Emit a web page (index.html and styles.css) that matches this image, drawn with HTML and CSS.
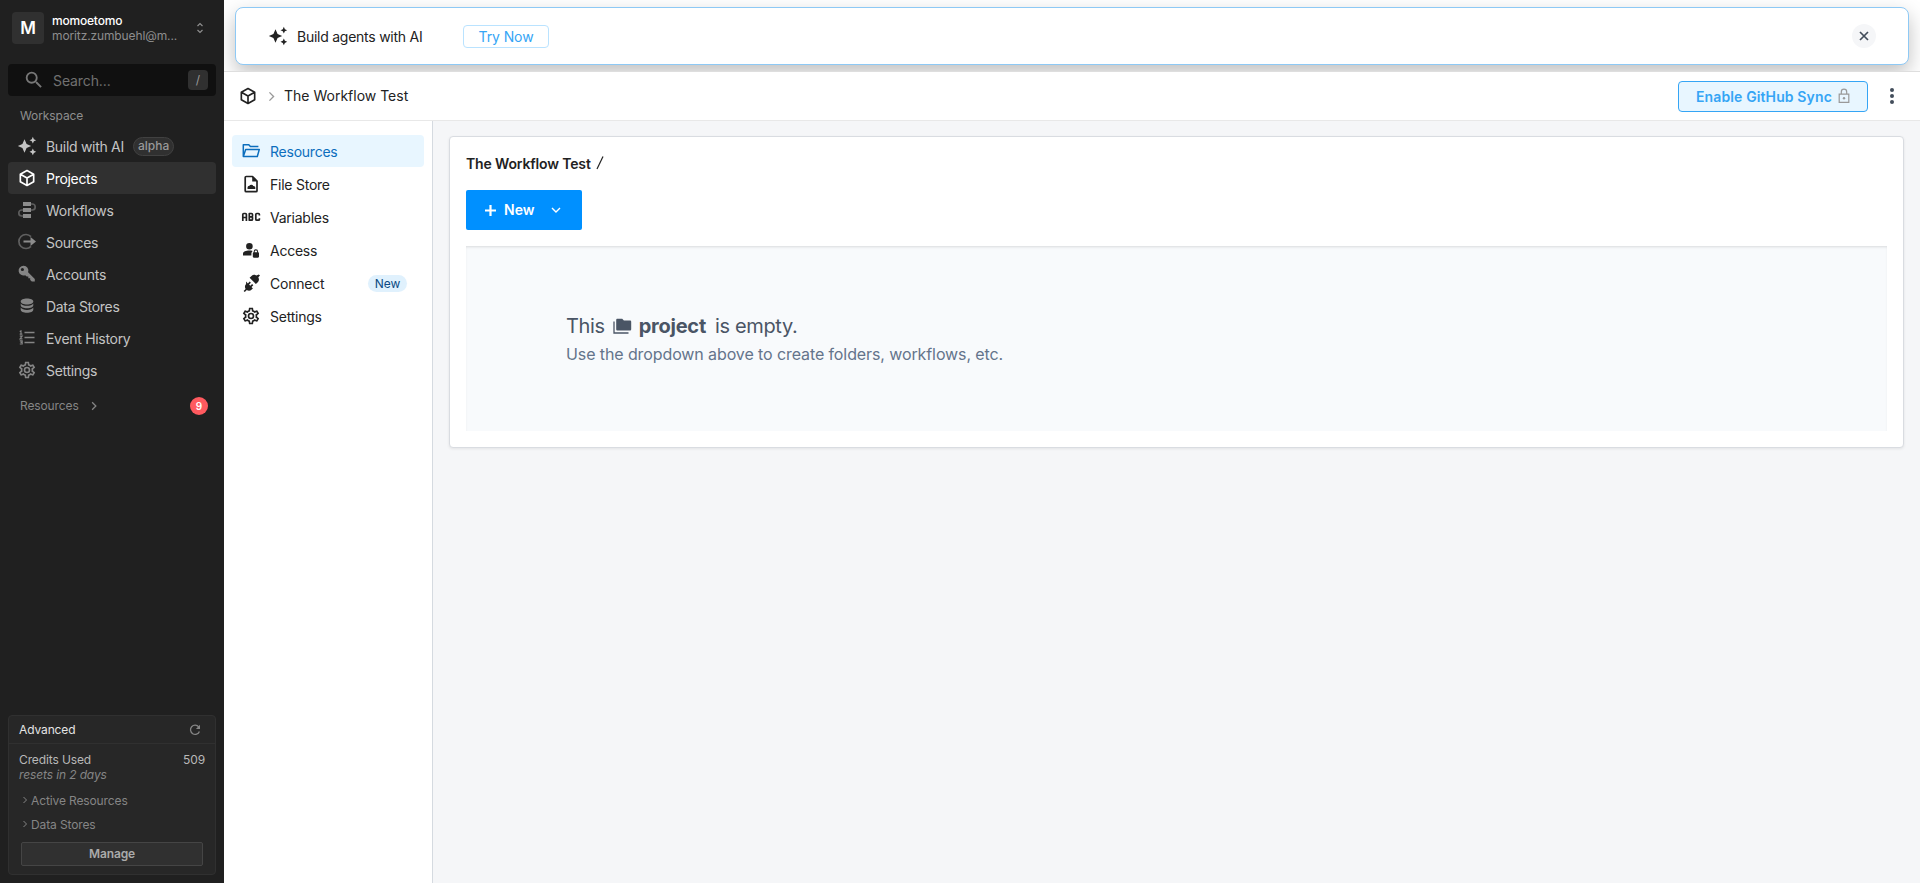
FILE: index.html
```html
<!DOCTYPE html>
<html lang="en">
<head>
<meta charset="utf-8">
<title>The Workflow Test</title>
<link rel="stylesheet" href="styles.css">
</head>
<body>
<svg class="defs" aria-hidden="true">
  <symbol id="sparkles" viewBox="0 0 24 24"><path fill="currentColor" d="M19 9l1.25-2.75L23 5l-2.75-1.25L19 1l-1.25 2.75L15 5l2.75 1.25L19 9zm-7.5.5L9 4 6.5 9.5 1 12l5.5 2.5L9 20l2.5-5.5L17 12l-5.5-2.5zM19 15l-1.25 2.75L15 19l2.75 1.25L19 23l1.25-2.75L23 19l-2.75-1.25L19 15z"/></symbol>
  <symbol id="cube" viewBox="0 0 24 24"><path fill="none" stroke="currentColor" stroke-width="2" stroke-linejoin="round" d="M12 3l8 4.500v9L12 21l-8-4.500v-9zM4 7.500l8 4.500 8-4.500M12 12v9"/></symbol>
  <symbol id="gear" viewBox="0 0 24 24"><path fill="currentColor" d="M12,8A4,4 0 0,1 16,12A4,4 0 0,1 12,16A4,4 0 0,1 8,12A4,4 0 0,1 12,8M12,10A2,2 0 0,0 10,12A2,2 0 0,0 12,14A2,2 0 0,0 14,12A2,2 0 0,0 12,10M10,22C9.75,22 9.54,21.82 9.5,21.58L9.13,18.93C8.5,18.68 7.96,18.34 7.44,17.94L4.95,18.95C4.73,19.03 4.46,18.95 4.34,18.73L2.34,15.27C2.21,15.05 2.27,14.78 2.46,14.63L4.57,12.97L4.5,12L4.57,11L2.46,9.37C2.27,9.22 2.21,8.95 2.34,8.73L4.34,5.27C4.46,5.05 4.73,4.96 4.95,5.05L7.44,6.05C7.96,5.66 8.5,5.32 9.13,5.07L9.5,2.42C9.54,2.18 9.75,2 10,2H14C14.25,2 14.46,2.18 14.5,2.42L14.87,5.07C15.5,5.32 16.04,5.66 16.56,6.05L19.05,5.05C19.27,4.96 19.54,5.05 19.66,5.27L21.66,8.73C21.79,8.95 21.73,9.22 21.54,9.37L19.43,11L19.5,12L19.43,13L21.54,14.63C21.73,14.78 21.79,15.05 21.66,15.27L19.66,18.73C19.54,18.95 19.27,19.04 19.05,18.95L16.56,17.95C16.04,18.34 15.5,18.68 14.87,18.93L14.5,21.58C14.46,21.82 14.25,22 14,22H10M11.25,4L10.88,6.61C9.68,6.86 8.62,7.5 7.85,8.39L5.44,7.35L4.69,8.65L6.8,10.2C6.4,11.37 6.4,12.64 6.8,13.8L4.68,15.36L5.43,16.66L7.86,15.62C8.63,16.5 9.68,17.14 10.87,17.38L11.24,20H12.76L13.13,17.39C14.32,17.14 15.37,16.5 16.14,15.62L18.57,16.66L19.32,15.36L17.2,13.81C17.6,12.64 17.6,11.37 17.2,10.2L19.31,8.65L18.56,7.35L16.15,8.39C15.38,7.5 14.32,6.86 13.12,6.62L12.75,4H11.25Z"/></symbol>
  <symbol id="chevron" viewBox="0 0 8 8"><path fill="none" stroke="currentColor" stroke-width="1" d="M2.500 1l3 3-3 3"/></symbol>
</svg>
<div class="app">
  <aside class="sidebar">
    <div class="account">
      <div class="avatar">M</div>
      <div class="who"><div class="name">momoetomo</div><div class="mail">moritz.zumbuehl@m...</div></div>
      <svg class="updown" viewBox="0 0 8 12"><path fill="none" stroke="currentColor" stroke-width="1.200" d="M1.500 4L4 1.500 6.500 4M1.500 8L4 10.500 6.500 8"/></svg>
    </div>
    <div class="search">
      <svg class="lens" viewBox="0 0 24 24"><path fill="currentColor" d="M15.500 14h-.79l-.28-.27A6.470 6.470 0 0 0 16 9.500 6.500 6.500 0 1 0 9.500 16c1.610 0 3.090-.59 4.230-1.570l.27.28v.79l5 4.990L20.490 19l-4.990-5zm-6 0C7.010 14 5 11.990 5 9.500S7.010 5 9.500 5 14 7.010 14 9.500 11.990 14 9.500 14z"/></svg>
      <span class="placeholder">Search...</span><span class="key">/</span>
    </div>
    <div class="group">Workspace</div>
    <nav class="menu">
      <a class="item"><svg class="icon bright"><use href="#sparkles"/></svg><span class="label">Build with AI</span><span class="alpha">alpha</span></a>
      <a class="item current"><svg class="icon"><use href="#cube"/></svg><span class="label">Projects</span></a>
      <a class="item"><svg class="icon" viewBox="0 0 20 20"><path fill="none" stroke="#5c5c5c" stroke-width="1.700" d="M14 4h1.200a2.900 2.900 0 0 1 0 6H4.800a2.900 2.900 0 0 0 0 6H7"/><path fill="#8c8c8c" d="M6 2h8v4H6zM6 8h8v4H6zM6 14h8v4H6z"/></svg><span class="label">Workflows</span></a>
      <a class="item"><svg class="icon" viewBox="0 0 20 20"><path fill="none" stroke="#606060" stroke-width="1.700" d="M14 4.700A7 7 0 1 0 14 14.300"/><path fill="#8c8c8c" d="M6.500 8.500h7V5l5.500 4.500-5.500 4.500v-3.500h-7z"/></svg><span class="label">Sources</span></a>
      <a class="item"><svg class="icon" viewBox="0 0 20 20"><path fill="currentColor" fill-rule="evenodd" d="M6.600 1.700a4.900 4.900 0 1 0 1.600 9.500l1.500 1.300h1.600v1.700h1.900v1.900l1.600 1.500h3v-2.700l-6.700-6.700A4.900 4.900 0 0 0 6.600 1.700zM5.400 3.900a1.600 1.600 0 1 1 0 3.200 1.600 1.600 0 0 1 0-3.200z"/></svg><span class="label">Accounts</span></a>
      <a class="item"><svg class="icon" viewBox="0 0 20 20"><path fill="currentColor" d="M10 2.600c3.500 0 6.300 1.200 6.300 2.900S13.500 8.500 10 8.500 3.700 7.200 3.700 5.500 6.500 2.600 10 2.600z"/><path fill="currentColor" d="M3.700 7.400c1 1.400 3.400 2.300 6.300 2.300s5.300-.9 6.300-2.300v1.900c0 1.700-2.800 3-6.300 3s-6.300-1.300-6.300-3zM3.700 11.600c1 1.400 3.400 2.300 6.300 2.300s5.300-.9 6.300-2.300v2.200c0 1.700-2.800 3-6.300 3s-6.300-1.300-6.300-3z"/></svg><span class="label">Data Stores</span></a>
      <a class="item"><svg class="icon" viewBox="0 0 20 20"><path fill="none" stroke="currentColor" stroke-width="1.400" d="M7.500 4.500h10M7.500 9.500h10M7.500 14.500h10"/><path fill="none" stroke="currentColor" stroke-width="1.100" d="M2.700 3.600l1.300-.7v3.200M2.700 6.100h2.700M2.800 8.100h2.400l-2.200 2.800h2.500M2.800 12.900h2.400v3.100H2.800M3.500 14.400h1.700"/></svg><span class="label">Event History</span></a>
      <a class="item"><svg class="icon"><use href="#gear"/></svg><span class="label">Settings</span></a>
    </nav>
    <div class="more"><span>Resources</span><svg class="more-arrow"><use href="#chevron"/></svg><span class="count">9</span></div>
    <section class="plan">
      <div class="plan-head"><span>Advanced</span><svg class="refresh" viewBox="0 0 12 12"><path fill="none" stroke="currentColor" stroke-width="1.300" d="M9.700 2.900A4.600 4.600 0 1 0 10.400 7.400"/><path fill="currentColor" d="M11 .8v4.100H6.900z"/></svg></div>
      <div class="plan-body">
        <div class="credits"><span>Credits Used</span><span>509</span></div>
        <div class="resets">resets in 2 days</div>
        <div class="fold"><svg><use href="#chevron"/></svg><span>Active Resources</span></div>
        <div class="fold"><svg><use href="#chevron"/></svg><span>Data Stores</span></div>
        <div class="manage">Manage</div>
      </div>
    </section>
  </aside>
  <main class="main">
    <div class="banner-area">
      <div class="banner">
        <svg class="icon"><use href="#sparkles"/></svg><span class="banner-text">Build agents with AI</span><span class="try">Try Now</span>
        <span class="close"><svg viewBox="0 0 10 10"><path fill="none" stroke="currentColor" stroke-width="1.700" d="M1 1l8 8M9 1L1 9"/></svg></span>
      </div>
    </div>
    <header class="topbar">
      <svg class="icon"><use href="#cube"/></svg><svg class="crumb-arrow"><use href="#chevron"/></svg><span class="crumb">The Workflow Test</span>
      <span class="sync"><span class="sync-text">Enable GitHub Sync</span><svg viewBox="0 0 12 16"><path fill="none" stroke="#999" stroke-width="1.200" d="M1.200 6.200h9.600v8.200H1.200zM3.300 6V3.900a2.700 2.700 0 0 1 5.400 0V6"/><circle cx="6" cy="10.300" r="1.200" fill="#999"/></svg></span>
      <svg class="dots" viewBox="0 0 4 18"><g fill="currentColor"><circle cx="2" cy="3" r="2"/><circle cx="2" cy="9" r="2"/><circle cx="2" cy="15" r="2"/></g></svg>
    </header>
    <div class="body">
      <nav class="tabs">
        <a class="tab active"><svg class="icon" viewBox="0 0 20 20"><path fill="none" stroke="currentColor" stroke-width="1.500" stroke-linejoin="round" d="M2.300 15V3.700h5.500l1.600 1.700h8M2.300 15.500L4.700 8.400h13.600l-2 7.100z"/></svg><span class="label">Resources</span></a>
        <a class="tab"><svg class="icon" viewBox="0 0 20 20"><path fill="none" stroke="currentColor" stroke-width="1.700" stroke-linejoin="round" d="M11.500 2.500H5.200c-.6 0-1 .4-1 1v13.200c0 .6.400 1 1 1h9.800c.6 0 1-.4 1-1V7z"/><path fill="currentColor" d="M11.200 2v5.500h5.300zM6.500 15v-1.200c0-1.200.8-2 1.900-2a2.200 2.200 0 0 1 3.900.2c1.200-.1 2 .7 2 1.700V15z"/></svg><span class="label">File Store</span></a>
        <a class="tab"><svg class="icon" viewBox="0 0 20 20"><path fill="none" stroke="currentColor" stroke-width="1.700" stroke-linejoin="round" d="M1.800 14V7.500q0-1 1-1h1.600q1 0 1 1V14M1.800 10.500h3.600M8.300 6.500v6.700h2.200q1 0 1-1v-1.600l-.7-.7.7-.7V7.500q0-1-1-1zM8.300 9.900h2.600M18.400 8.500v-1q0-1-1-1h-1.600q-1 0-1 1v4.700q0 1 1 1h1.600q1 0 1-1v-1"/></svg><span class="label">Variables</span></a>
        <a class="tab"><svg class="icon" viewBox="0 0 20 20"><path fill="currentColor" fill-rule="evenodd" d="M8.400 3a3.300 3.300 0 1 1 0 6.600 3.300 3.300 0 0 1 0-6.600zM2 15.500v-1.700c0-2.200 2.900-3.300 6.400-3.300 1.200 0 2.300.1 3.200.4-.8.800-1.200 1.700-1.200 2.600v2zM12.700 12.300v-.8a2.200 2.200 0 0 1 4.400 0v.8c.6.100.9.500.9 1v3.300c0 .7-.4 1.100-1.100 1.100h-4c-.7 0-1.100-.4-1.100-1.100v-3.300c0-.5.3-.9.900-1zm1 0h2.400v-.8c0-1.500-2.400-1.500-2.400 0z"/></svg><span class="label">Access</span></a>
        <a class="tab"><svg class="icon" viewBox="0 0 20 20"><path fill="currentColor" d="M17.800 1.400l1.200 1.200-1.700 1.700c1 1.700.9 3.500-.5 4.900l-1.900 1.900-6.300-6.300 1.900-1.900c1.400-1.400 3.200-1.500 4.900-.5zM5 8.500l1.900 1.900 1.800-1.800 1.200 1.200-1.800 1.800 1.200 1.200 1.800-1.800 1.200 1.200-1.800 1.800 1.400 1.400-1.200 1.200c-1.400 1.400-3.300 1.500-4.900.5l-2 2-1.200-1.200 2-2c-1-1.600-.9-3.500.5-4.900z"/></svg><span class="label">Connect</span><span class="new-tag">New</span></a>
        <a class="tab"><svg class="icon"><use href="#gear"/></svg><span class="label">Settings</span></a>
      </nav>
      <div class="content">
        <section class="card">
          <div class="path"><span>The Workflow Test</span><svg class="slash" viewBox="0 0 8 14"><path fill="none" stroke="currentColor" stroke-width="1.200" d="M7 .5L1 13"/></svg></div>
          <div class="new"><svg class="plus" viewBox="0 0 10 10"><path fill="none" stroke="currentColor" stroke-width="2" d="M5 0v10M0 5h10"/></svg><span>New</span><svg class="down" viewBox="0 0 10 6"><path fill="none" stroke="currentColor" stroke-width="1.400" d="M1 1l4 4 4-4"/></svg></div>
          <div class="empty">
            <div class="empty-title"><span>This</span><svg viewBox="0 0 19 16"><path fill="none" stroke="currentColor" stroke-width="1.300" d="M1 3.500V15h14.500"/><path fill="currentColor" d="M4.500.7h4.700l1.700 1.700h6c.8 0 1.300.5 1.300 1.300v7.600c0 .8-.5 1.300-1.300 1.300H4.500c-.8 0-1.300-.5-1.300-1.300V2c0-.8.500-1.300 1.300-1.300z"/></svg><b>project</b><span>is empty.</span></div>
            <div class="empty-text">Use the dropdown above to create folders, workflows, etc.</div>
          </div>
        </section>
      </div>
    </div>
  </main>
</div>
</body>
</html>
```
FILE: styles.css
```css
* { box-sizing: border-box; }
body { margin: 0; font-family: Inter, "Liberation Sans", sans-serif; font-size: 14px; line-height: 20px; color: #222; }
.defs { position: absolute; width: 0; height: 0; }
svg { display: block; flex: none; }
.app { display: flex; width: 100%; height: 100vh; overflow: hidden; }
.icon { width: 20px; height: 20px; }
.label { padding-top: 2px; }

/* Sidebar */
.sidebar { display: flex; flex-direction: column; flex: none; width: 224px; padding: 12px 8px 8px; background: #202020; color: #c4c4c4; }
.account { display: flex; height: 32px; padding-left: 4px; }
.avatar { width: 32px; height: 32px; border-radius: 4px; background: #303030; color: #fff; font-size: 17px; font-weight: 600; line-height: 32px; text-align: center; }
.who { width: 140px; margin: 1px 0 0 8px; white-space: nowrap; line-height: 15px; }
.name { color: #fff; font-size: 12px; font-weight: 500; letter-spacing: -0.2px; }
.mail { color: #8e8e8e; font-size: 12px; letter-spacing: -0.12px; }
.updown { width: 8px; height: 12px; margin: 10px 0 0 4px; color: #8e8e8e; }
.search { display: flex; align-items: center; height: 32px; margin-top: 20px; padding: 0 8px 0 15px; border-radius: 4px; background: #101010; color: #707070; }
.lens { width: 22px; height: 22px; color: #777; }
.placeholder { margin: 2px 0 0 8px; letter-spacing: -0.1px; }
.key { width: 20px; height: 20px; margin-left: auto; border-radius: 4px; background: #303030; color: #999; font-size: 12px; text-align: center; }
.group { height: 34px; padding: 10px 12px 0; color: #8e8e8e; font-size: 12px; line-height: 20px; letter-spacing: -0.1px; }
.item { display: flex; align-items: center; height: 32px; padding-left: 9px; border-radius: 4px; letter-spacing: -0.3px; }
.item .icon { margin-right: 9px; color: #858585; }
.item .bright { color: #c4c4c4; }
.current { background: #303030; color: #fff; }
.current .icon { color: #fff; }
.alpha { height: 19px; margin-left: 9px; padding: 0 4px; border: 1px solid #414141; border-radius: 10px; background: #303030; color: #999; font-size: 12px; font-weight: 500; line-height: 16px; letter-spacing: 0; }
.more { display: flex; align-items: center; height: 40px; padding: 0 8px 0 12px; color: #858585; font-size: 12px; letter-spacing: -0.12px; }
.more-arrow { width: 10px; height: 10px; margin-left: 10px; }
.count { width: 18px; height: 18px; margin-left: auto; border-radius: 50%; background: #ff5a5f; color: #fff; font-size: 10px; font-weight: 600; line-height: 18px; text-align: center; }
.plan { height: 160px; margin-top: auto; border: 1px solid #303030; border-radius: 4px; background: #272727; font-size: 12px; letter-spacing: -0.12px; }
.plan-head { display: flex; justify-content: space-between; align-items: center; height: 28px; padding: 0 14px 0 10px; border-bottom: 1px solid #303030; color: #e4e4e4; }
.refresh { width: 12px; height: 12px; color: #858585; }
.plan-body { padding: 8px 10px 0; }
.credits { display: flex; justify-content: space-between; line-height: 15px; color: #b8b8b8; }
.resets { font-style: italic; line-height: 15px; color: #858585; }
.fold { display: flex; align-items: center; height: 24px; color: #858585; }
.resets + .fold { margin-top: 7px; }
.fold svg { width: 8px; height: 8px; margin: 0 2px 2px 2px; }
.manage { height: 24px; margin: 5px 2px 0; border: 1px solid #454545; border-radius: 2px; background: #303030; color: #aaa; font-weight: 600; line-height: 22px; text-align: center; }

/* Banner and top bar */
.main { display: flex; flex-direction: column; flex: 1; min-width: 0; background: #f5f6f8; }
.banner-area { height: 72px; padding: 7px 11px 0; overflow: hidden; border-bottom: 1px solid #dedede; background: #fff; }
.banner { display: flex; align-items: center; height: 58px; padding: 0 32px 0 33px; border: 1px solid #8ec9f5; border-radius: 8px; background: #fff; box-shadow: 0 8px 20px rgba(0, 0, 0, .25); }
.banner .icon { margin-left: -1px; }
.banner-text { width: 127px; margin: 2px 0 0 9px; white-space: nowrap; letter-spacing: -0.25px; }
.try { width: 86px; height: 23px; margin-left: 39px; border: 1px solid #bae3ff; border-radius: 4px; color: #35a5f5; line-height: 22px; text-align: center; letter-spacing: -0.1px; }
.close { display: grid; place-items: center; width: 24px; height: 24px; margin-left: auto; border-radius: 50%; background: #f5f6f8; color: #434d5b; }
.close svg { width: 10px; height: 10px; }
.topbar { display: flex; align-items: center; flex: none; height: 49px; padding: 0 26px 0 14px; border-bottom: 1px solid #e8e8e8; background: #fff; }
.crumb-arrow { width: 11px; height: 11px; margin: 1px 7px 0 8px; color: #999; }
.sync { display: flex; align-items: center; width: 190px; height: 31px; margin-left: auto; padding-left: 17px; border: 1px solid #35a5f5; border-radius: 4px; background: #e8f6ff; color: #35a5f5; font-weight: 600; letter-spacing: .12px; }
.sync-text { padding-top: 2px; }
.sync svg { width: 12px; height: 16px; margin-left: 6px; }
.dots { width: 4px; height: 18px; margin-left: 22px; color: #434d5b; }

/* Project navigation */
.body { display: flex; flex: 1; min-height: 0; }
.tabs { display: flex; flex-direction: column; gap: 1px; width: 209px; padding: 14px 8px 0; border-right: 1px solid #d5dae0; background: #fff; }
.tab { display: flex; align-items: center; height: 32px; padding: 0 17px 0 9px; border-radius: 4px; letter-spacing: -0.24px; }
.tab .icon { margin-right: 9px; }
.active { background: #e8f6ff; color: #0c6ebd; }
.new-tag { width: 39px; height: 17px; margin-left: auto; border-radius: 9px; background: #e0f1fd; color: #0b4a83; font-size: 12px; line-height: 17px; text-align: center; letter-spacing: 0; }

/* Project contents */
.content { flex: 1; padding: 15px 16px; }
.card { height: 312px; padding: 17px 16px; border: 1px solid #d9dce1; border-radius: 4px; background: #fff; box-shadow: 0 1px 3px rgba(0, 0, 0, .08); }
.path { display: flex; gap: 5px; font-weight: 600; line-height: 20px; letter-spacing: -0.15px; }
.slash { width: 8px; height: 14px; margin-top: 2px; }
.new { display: flex; align-items: center; width: 116px; height: 40px; margin-top: 16px; padding-left: 19px; border-radius: 2px; background: #0090ff; color: #fff; font-weight: 600; }
.plus { width: 11px; height: 11px; margin-right: 8px; }
.down { width: 10px; height: 6px; margin-left: 17px; }
.empty { height: 185px; margin-top: 16px; padding: 66px 100px 0; background: #f8fafc; box-shadow: inset 0 2px 3px -1px rgba(0, 0, 0, .13); }
.empty-title { display: flex; align-items: center; height: 28px; color: #4a5565; font-size: 20px; letter-spacing: -0.35px; }
.empty-title svg { width: 19px; height: 16px; margin: 0 7px 0 8px; }
.empty-title b { margin-right: 9px; font-weight: 700; letter-spacing: -0.25px; }
.empty-text { color: #64748b; font-size: 16px; line-height: 28px; letter-spacing: -0.1px; }
```
